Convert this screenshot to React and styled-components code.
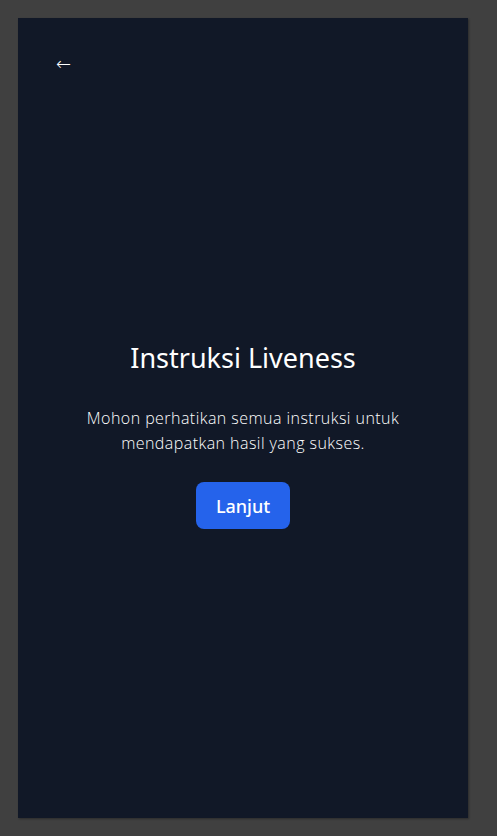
import React from 'react';
import styled, { createGlobalStyle } from 'styled-components';

const GlobalStyle = createGlobalStyle`
	* {
		box-sizing: border-box;
	}
	body {
		margin: 0;
		background: #404040;
		font-family: 'Noto Sans', 'Open Sans', sans-serif;
	}
`;

const App = () => {
	return (
		<>
			<GlobalStyle />
			<Page>
				<Panel>
					<Header>
						<BackButton aria-label="Kembali">←</BackButton>
					</Header>
					<Main>
						<Title>Instruksi Liveness</Title>
						<Description>
							Mohon perhatikan semua instruksi untuk
							<br />
							mendapatkan hasil yang sukses.
						</Description>
						<PrimaryButton>Lanjut</PrimaryButton>
					</Main>
				</Panel>
			</Page>
		</>
	);
};

export default App;

const Page = styled.div`
	padding: 18px 29px 18px 18px;
	min-height: 836px;
`;

const Panel = styled.div`
	width: 450px;
	height: 800px;
	background: #111827;
	display: flex;
	flex-direction: column;
	box-shadow: 1px 1px 2px rgba(0, 0, 0, 0.35);
`;

const Header = styled.div`
	padding: 32px 0 0 38px;
	height: 80px;
`;

const BackButton = styled.button`
	background: none;
	border: none;
	color: #ffffff;
	font-size: 18px;
	line-height: 28px;
	padding: 0;
	cursor: pointer;
	font-family: 'DejaVu Sans', sans-serif;
	font-weight: 300;
`;

const Main = styled.main`
	flex: 1;
	display: flex;
	flex-direction: column;
	align-items: center;
	justify-content: center;
	padding-bottom: 47px;
	color: #ffffff;
	text-align: center;
`;

const Title = styled.h1`
	margin: 0 0 30px;
	font-size: 27px;
	font-weight: 400;
	line-height: 36px;
`;

const Description = styled.p`
	margin: 0 0 26px;
	font-family: 'Open Sans', sans-serif;
	font-size: 16px;
	font-weight: 300;
	letter-spacing: 0.45px;
	line-height: 25px;
	color: #ffffff;
`;

const PrimaryButton = styled.button`
	background: #2563eb;
	color: #ffffff;
	border: none;
	border-radius: 8px;
	padding: 0 20px;
	height: 47px;
	font-family: inherit;
	font-size: 18px;
	font-weight: 500;
	cursor: pointer;
`;
